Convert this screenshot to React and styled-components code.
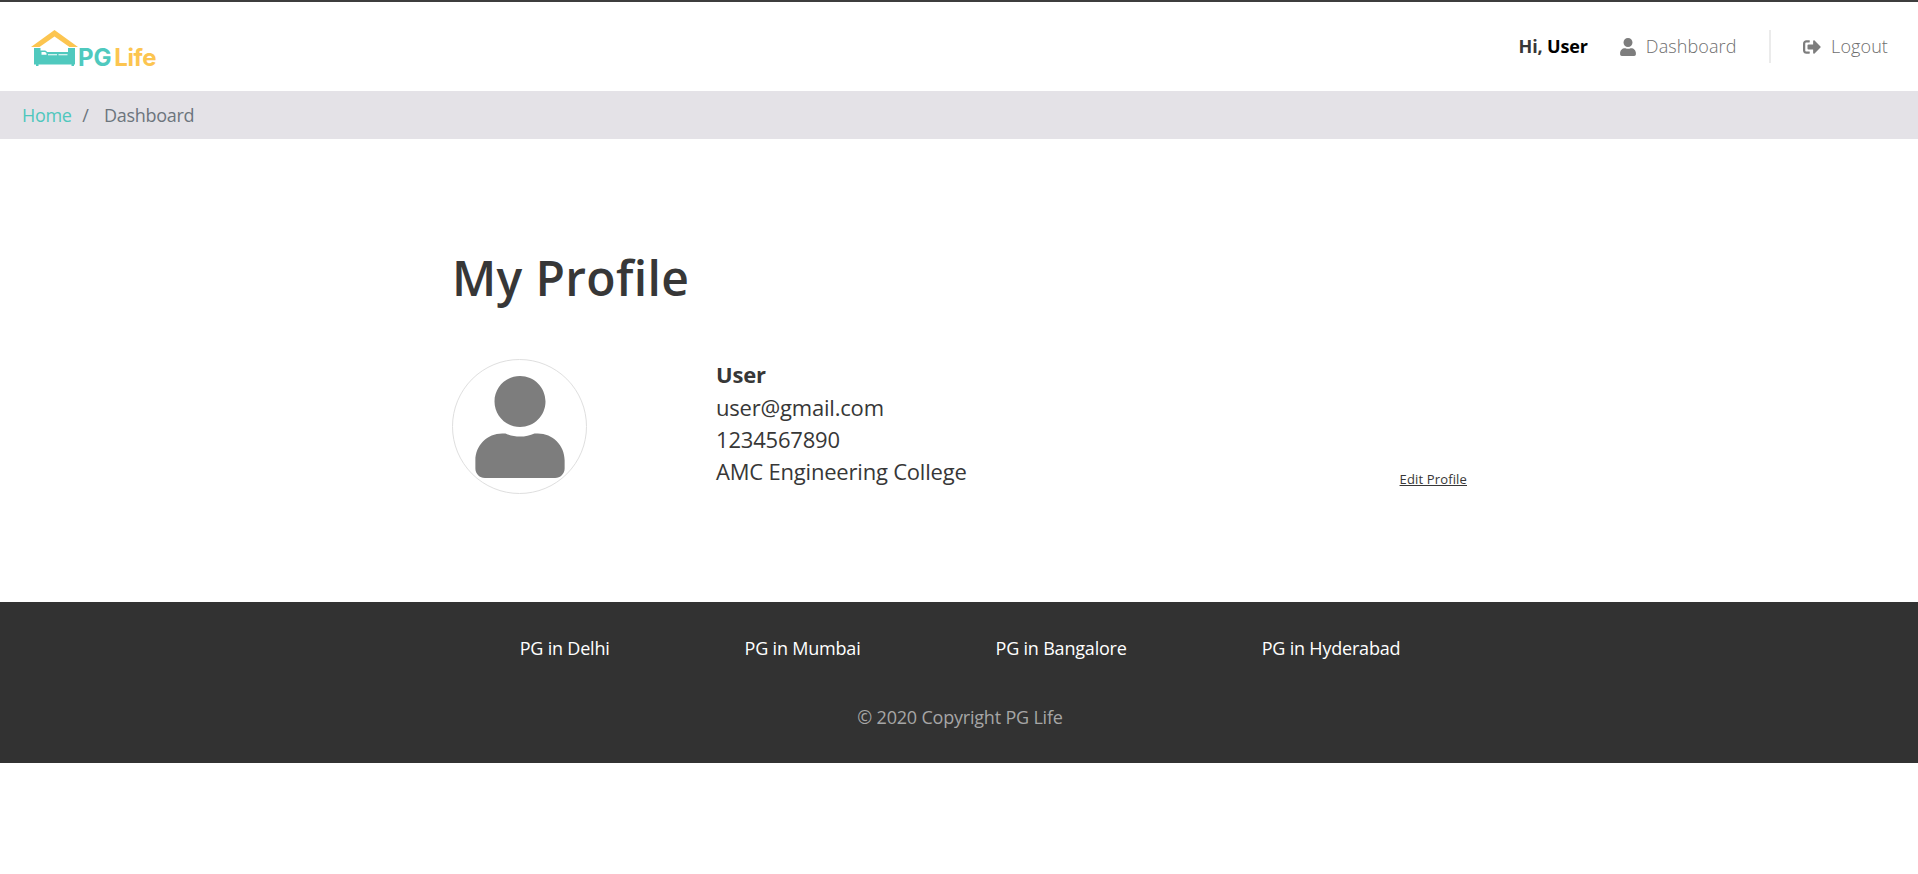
import React from "react";
import styled, { createGlobalStyle } from "styled-components";
import { FaUser, FaSignOutAlt } from "react-icons/fa";

const GlobalStyle = createGlobalStyle`
  *, *::before, *::after { box-sizing: border-box; }
  body {
    margin: 0;
    background: #fff;
    color: #373737;
    font-family: "Open Sans", "Noto Sans", sans-serif;
    font-size: 18px;
    line-height: 1.5;
  }
  a { color: inherit; text-decoration: none; }
`;

const Header = styled.header`
  display: flex;
  align-items: center;
  justify-content: space-between;
  height: 91px;
  padding: 0 30px;
  border-top: 2px solid #3e3e3e;
`;

const LogoLink = styled.a`
  display: flex;
  align-items: flex-end;
  font-family: Inter, sans-serif;
  font-size: 24px;
  font-weight: 700;
  line-height: 28px;
  padding-top: 8px;
`;

const LogoMark = styled.svg`
  width: 48px;
  height: 38px;
  margin-bottom: 5px;
`;

const LogoWord = styled.span`
  color: ${(p) => p.$color};
  margin-left: ${(p) => p.$gap};
  letter-spacing: ${(p) => p.$spacing};
`;

const Nav = styled.nav`
  display: flex;
  align-items: center;
  font-weight: 300;
  letter-spacing: 0.1px;
`;

const Greeting = styled.span`
  margin-right: 31px;
  font-weight: 700;
  letter-spacing: -0.15px;
  b { color: #000; font-weight: 700; }
`;

const NavLink = styled.a`
  display: flex;
  align-items: center;
  gap: ${(p) => p.$gap};
  color: #6e6e6e;
  svg { color: #7d7d7d; }
`;

const Divider = styled.span`
  width: 2px;
  height: 33px;
  margin: 0 32.5px 0 32px;
  background: #ebebeb;
`;

const Breadcrumb = styled.nav`
  display: flex;
  align-items: center;
  height: 48px;
  padding: 0 22px;
  background: #e4e2e7;
  color: #6c757d;
  letter-spacing: -0.3px;
  a { color: #4fc7bd; }
`;

const Slash = styled.span`
  margin: 0 15.5px 0 10.5px;
`;

const Profile = styled.main`
  width: 1016px;
  height: 463px;
  margin: 0 auto;
  padding: 102px 0 0 1px;
`;

const Title = styled.h1`
  margin: 0 0 44px;
  font-size: 48px;
  font-weight: 600;
  line-height: 74px;
  letter-spacing: 0.35px;
`;

const ProfileRow = styled.div`
  display: flex;
  height: 135px;
`;

const Avatar = styled.div`
  display: flex;
  align-items: center;
  justify-content: center;
  width: 135px;
  height: 135px;
  margin-right: 129px;
  border: 1px solid #dfdfdf;
  border-radius: 50%;
  color: #7d7d7d;
  font-size: 102px;
`;

const Details = styled.div`
  flex: 1;
  font-size: 22px;
  line-height: 32px;
  letter-spacing: -0.2px;
`;

const Name = styled.div`
  margin-bottom: 2px;
  font-weight: 700;
  line-height: 30px;
`;

const EditLink = styled.a`
  align-self: flex-end;
  margin-bottom: 5px;
  font-size: 13px;
  line-height: 19px;
  letter-spacing: 0.15px;
  text-decoration: underline;
`;

const Footer = styled.footer`
  height: 161px;
  padding: 33px 0 0 2px;
  background: #323232;
  color: #fff;
  letter-spacing: -0.2px;
`;

const Cities = styled.div`
  display: flex;
  justify-content: center;
  gap: 135px;
  margin-bottom: 42px;
`;

const Copyright = styled.div`
  color: #a6a6a6;
  text-align: center;
`;

function Logo() {
  return (
    <LogoLink href="#">
      <LogoMark viewBox="30 29 48 38" aria-hidden="true">
        <path d="M31 47 L54.5 30 L78 47 H69.5 L54.5 36.5 L39.5 47 Z" fill="#fcc550" />
        <path
          d="M34 48h6.500v2.500h4.500q1.500 0 2 1.500h21v-4h7v16.500h-1v1.500h-2.500v-1.500h-33v1.500h-2.500v-1.500h-2z"
          fill="#4fc9be"
        />
        <path d="M41.500 52h3.500q1.500 0.500 1.500 1.500v1.300h-5zM48 54.300h9v1h-9zM58.500 54.300h9v1h-9z" fill="#fff" />
      </LogoMark>
      <LogoWord $color="#4fc9be" $gap="0" $spacing="0">PG</LogoWord>
      <LogoWord $color="#fcc550" $gap="2.700px" $spacing="-0.400px">Life</LogoWord>
    </LogoLink>
  );
}

const cities = ["Delhi", "Mumbai", "Bangalore", "Hyderabad"];

export default function App() {
  return (
    <>
      <GlobalStyle />
      <Header>
        <Logo />
        <Nav>
          <Greeting>Hi, <b>User</b></Greeting>
          <NavLink href="#" $gap="9px"><FaUser size={18} />Dashboard</NavLink>
          <Divider />
          <NavLink href="#" $gap="10px"><FaSignOutAlt size={18} />Logout</NavLink>
        </Nav>
      </Header>
      <Breadcrumb>
        <a href="#">Home</a>
        <Slash>/</Slash>
        <span>Dashboard</span>
      </Breadcrumb>
      <Profile>
        <Title>My Profile</Title>
        <ProfileRow>
          <Avatar><FaUser /></Avatar>
          <Details>
            <Name>User</Name>
            <div>user@gmail.com</div>
            <div>1234567890</div>
            <div>AMC Engineering College</div>
          </Details>
          <EditLink href="#">Edit Profile</EditLink>
        </ProfileRow>
      </Profile>
      <Footer>
        <Cities>
          {cities.map((city) => <a href="#" key={city}>PG in {city}</a>)}
        </Cities>
        <Copyright>© 2020 Copyright PG Life</Copyright>
      </Footer>
    </>
  );
}
